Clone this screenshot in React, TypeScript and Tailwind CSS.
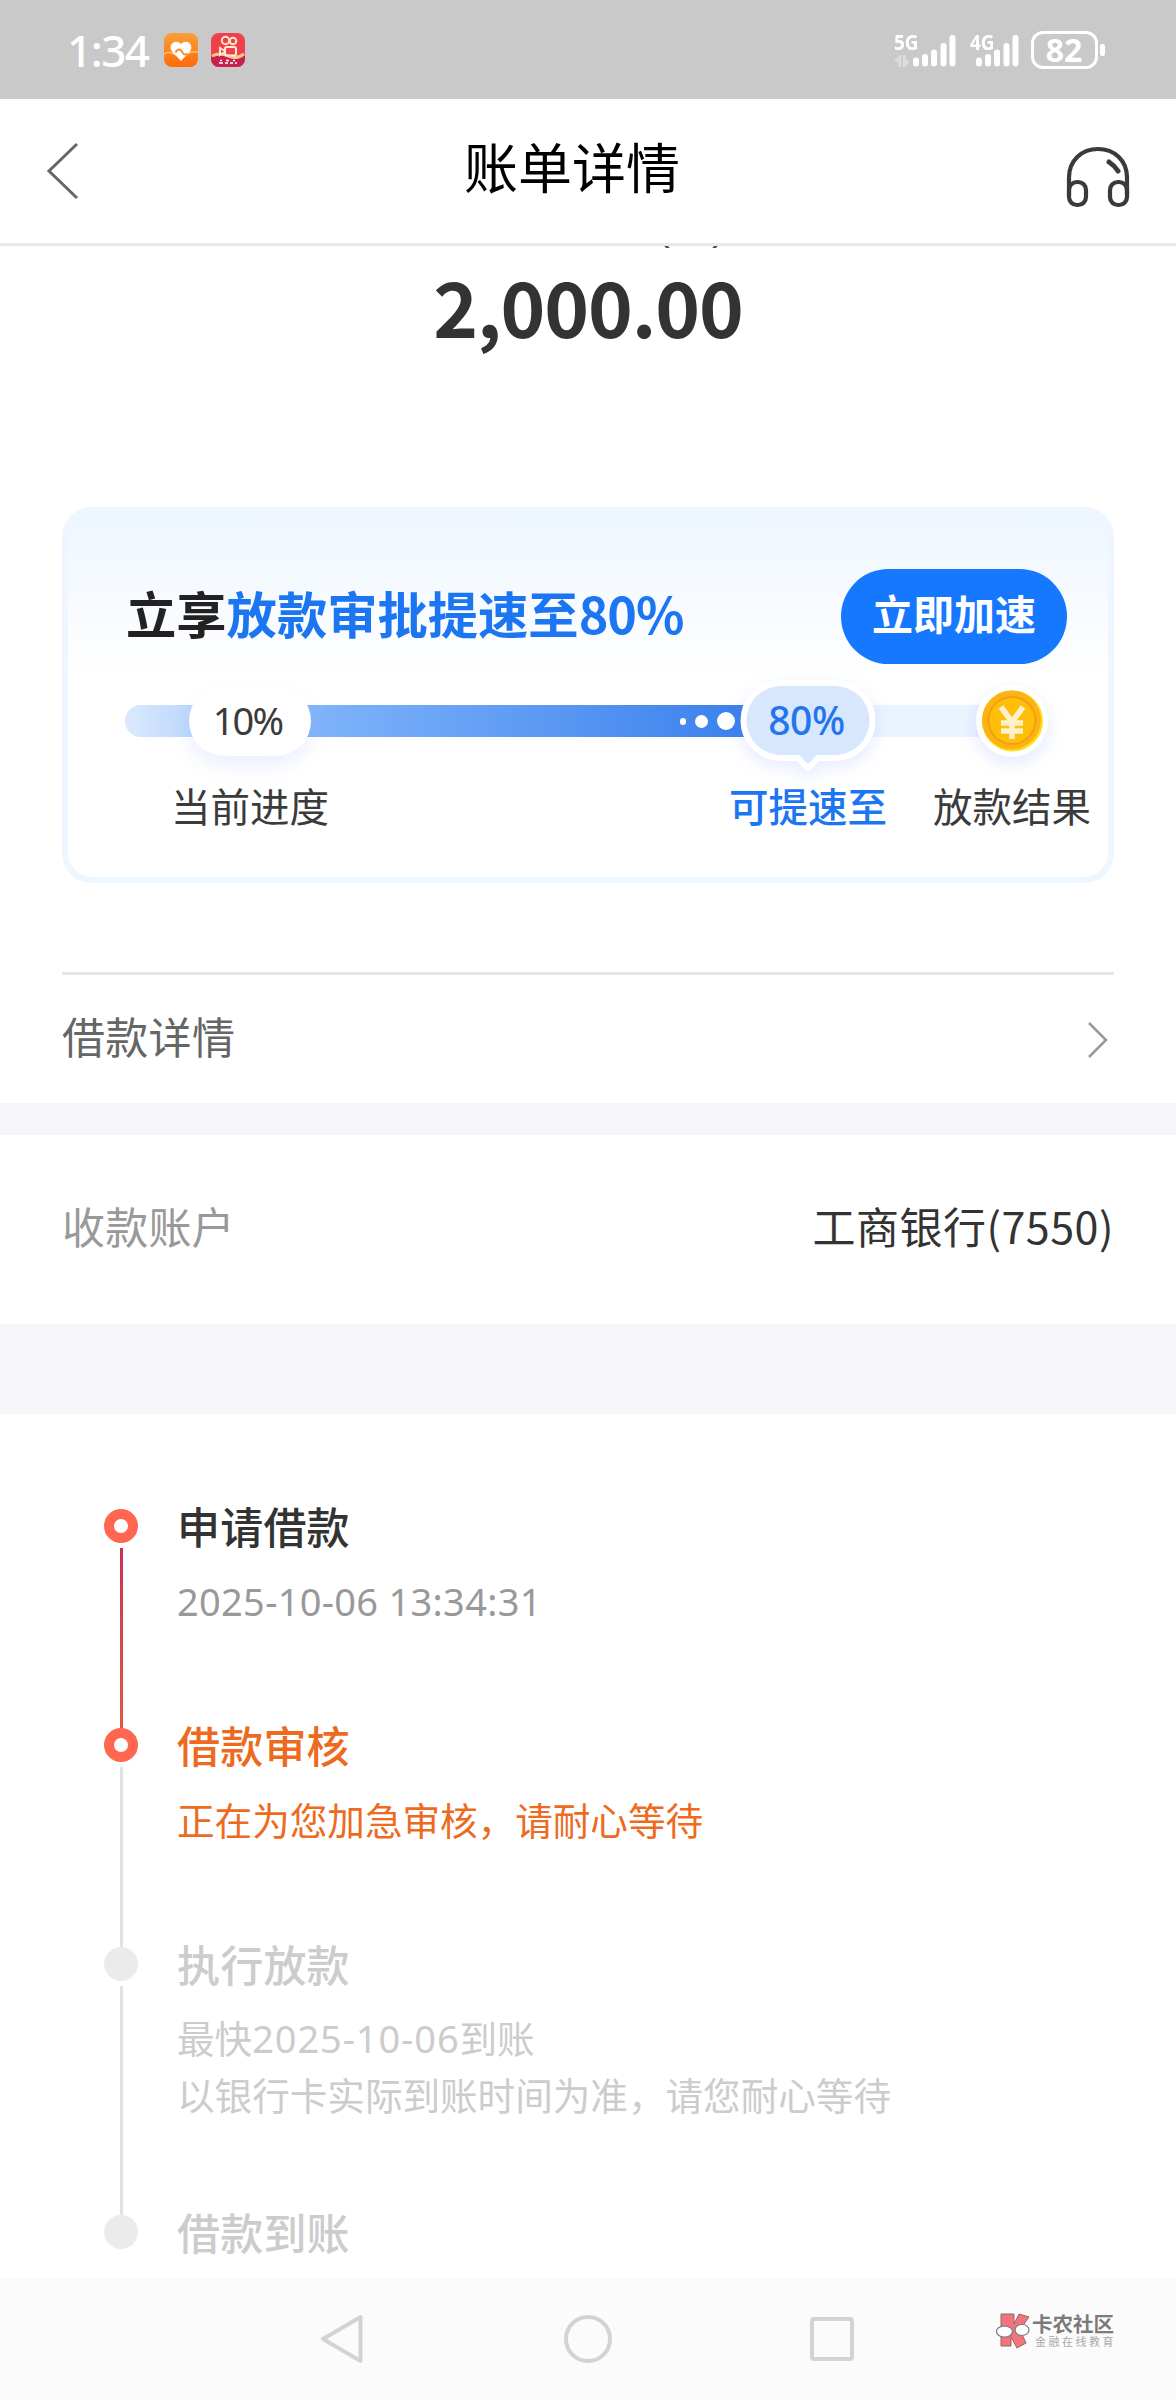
import type { ReactNode } from 'react'

function Bars() {
  return <path d="M3 29.500v3M12 26v6.500M21 21.500v11M30.500 15v17.500M39.500 7v25.500" stroke="#fff" strokeWidth="6" strokeLinecap="round" />
}

function StatusBar() {
  return (
    <div className="flex h-[99px] shrink-0 items-center bg-[#c9c9c9] text-white">
      <span className="ml-[67px] w-[97px] font-['Noto_Sans',sans-serif] text-[44px] leading-[60px] font-medium tracking-[-1.500px]">1:34</span>
      <svg width="34" height="34" viewBox="0 0 34 34" className="mt-px">
        <defs>
          <linearGradient id="heartBg" x1="0" y1="0" x2="0" y2="1">
            <stop offset="0" stopColor="#f9a03c" />
            <stop offset="1" stopColor="#ff6a06" />
          </linearGradient>
        </defs>
        <rect width="34" height="34" rx="8" fill="url(#heartBg)" />
        <path d="M0 21q5-3 10 0t12 0 12-2" fill="none" stroke="#ffc070" strokeWidth="1.5" />
        <path d="M17 28 8 18.5C3.500 12.500 10.500 5 17 11c6.500-6 13.500 1.500 9 7.500z" fill="#fff" />
        <path d="M11.500 19.500c2-4 5-4 7 0 1 2.500 3.500 2.500 5 1" fill="none" stroke="#ff8a22" strokeWidth="2" />
      </svg>
      <svg width="34" height="34" viewBox="0 0 34 34" className="mt-px ml-[13px]">
        <rect width="34" height="34" rx="8" fill="#f0404c" />
        <path d="M0 24q8-4 17-1t17-1v4a8 8 0 0 1-8 8H8a8 8 0 0 1-8-8z" fill="#c9204f" />
        <path d="M1 23q8-4 16 0t16-2" fill="none" stroke="#ffc58c" strokeWidth="3" />
        <g fill="none" stroke="#ffe9cf" strokeWidth="2">
          <circle cx="14.500" cy="7.500" r="3.700" />
          <circle cx="22" cy="8" r="3.300" />
          <rect x="14" y="14" width="11" height="8.500" rx="2" />
          <path d="m14 18-5-3v7l5-3" />
        </g>
        <path d="M8 30h4m2 0h3m2 0h3m2 0h2M9 27.500h2m4 0h3m4 0h2" stroke="#fff" strokeWidth="1.500" />
      </svg>
      <div className="relative ml-auto flex h-[38px] w-[64px] justify-end">
        <span className="absolute top-[-3px] left-0 origin-left scale-x-[0.86] font-['Noto_Sans',sans-serif] text-[22px] leading-[26px] font-bold">5G</span>
        <svg width="45" height="38" viewBox="0 0 45 38"><Bars /></svg>
        <svg width="16" height="12" viewBox="0 0 16 12" className="absolute top-[24px] left-0">
          <path d="M6 12V2L1.500 6.500M10.500 0v10l4-4" fill="none" stroke="#dcdcdc" strokeWidth="3" />
        </svg>
      </div>
      <div className="relative ml-[12px] flex h-[38px] w-[51px] justify-end">
        <span className="absolute top-[-3px] left-0 origin-left scale-x-[0.86] font-['Noto_Sans',sans-serif] text-[22px] leading-[26px] font-bold">4G</span>
        <svg width="45" height="38" viewBox="0 0 45 38"><Bars /></svg>
      </div>
      <div className="ml-[10px] flex h-[38px] w-[67px] items-center justify-center rounded-[12px] border-[3px] border-white pr-px font-['Noto_Sans',sans-serif] text-[32px] leading-[32px] font-bold">82</div>
      <div className="mr-[71px] ml-[2px] h-[12px] w-[5px] rounded-[2px] bg-white" />
    </div>
  )
}

function Header() {
  return (
    <header className="relative flex h-[147px] shrink-0 items-center justify-center border-b-[3px] border-[#e8e8e8]">
      <svg width="34" height="60" viewBox="0 0 34 60" className="absolute top-[42px] left-[46px]">
        <path d="M31 3 3 30l28 27" fill="none" stroke="#666" strokeWidth="3" />
      </svg>
      <h1 className="mr-[32px] mb-[11px] text-[54px] leading-[64px] text-black">账单详情</h1>
      <svg width="64" height="64" viewBox="0 0 64 64" className="absolute top-[46px] left-[1066px]" fill="none" stroke="#3a3a3a" strokeWidth="4.200">
        <path d="M3 50V32.500C3 15 16 4 32 4s29 11 29 28.500V50" />
        <rect x="3" y="37" width="17" height="23" rx="8" />
        <rect x="44" y="37" width="17" height="23" rx="8" />
        <path d="M43 17q5.500 3.500 9 9" strokeLinecap="round" strokeWidth="5" />
      </svg>
    </header>
  )
}

function Coin() {
  return (
    <svg width="80" height="84" viewBox="0 0 80 84" className="absolute top-[-20px] left-[847px] overflow-visible">
      <circle cx="40" cy="36" r="36" fill="#fff" className="drop-shadow-[0_6px_8px_rgba(80,110,255,0.16)]" />
      <circle cx="40.500" cy="36" r="30.500" fill="#ffde1c" />
      <circle cx="39.500" cy="35" r="29.500" fill="#fcb414" />
      <circle cx="40" cy="35.500" r="23.500" fill="#ffbe0a" stroke="#f0a010" strokeWidth="2" />
      <path d="m29 22 11 15 11-15M40 37v17M29 38h22M29 46h22" fill="none" stroke="#fff0cc" strokeWidth="5.500" />
    </svg>
  )
}

function SpeedCard() {
  return (
    <section className="mx-[62px] mt-[130px] flex h-[376px] shrink-0 flex-col rounded-[30px] border-[6px] border-[#eef6ff] bg-linear-to-b from-[#eef6ff] to-white to-[45%] pl-[57px]">
      <div className="mt-[56px] flex h-[95px] items-center justify-between pr-[41px]">
        <h2 className="mb-[10px] ml-px text-[50.300px] leading-[60px] font-bold whitespace-nowrap text-[#222]">
          立享<span className="text-[#1c76f2]">放款审批提速至<span className="tracking-[-1px]">80%</span></span>
        </h2>
        <button className="flex h-[95px] w-[226px] items-center justify-center rounded-full bg-[#1677ff] pb-[10px] text-[41px] leading-[48px] font-bold text-white">立即加速</button>
      </div>
      <div className="relative mt-[41px] flex h-[32px] w-[888px] rounded-l-full bg-[#ebf3fe]">
        <div className="flex h-full w-[630px] items-center justify-end gap-[9px] rounded-l-full bg-linear-to-r from-[#dbe9fd] via-[#7db2fa] via-32% to-[#397fec] pr-[20px]">
          <i className="h-[7px] w-[6px] rounded-full bg-white" />
          <i className="size-[13px] rounded-full bg-white" />
          <i className="size-[18px] rounded-full bg-white" />
        </div>
        <div className="absolute top-[-19px] left-[64px] flex h-[70px] w-[122px] items-center justify-center rounded-full bg-white pr-[5px] pb-[2px] font-['Noto_Sans',sans-serif] text-[38px] tracking-[-1.800px] text-[#3b3b3b] shadow-[0_10px_18px_rgba(80,110,255,0.1)]">10%</div>
        <div className="absolute top-[-19px] left-[622px] flex h-[69px] w-[123px] items-center justify-center pr-[4px] pb-px font-['Noto_Sans',sans-serif] text-[39px] font-medium tracking-[-0.500px] text-[#2474ee]">
          <svg width="146" height="100" viewBox="0 0 146 100" className="absolute top-[-10px] left-[-11px] overflow-visible">
            <path d="M45 10h54a34.500 34.500 0 0 1 0 69h-18l-9 9-9-9H45a34.500 34.500 0 0 1 0-69z" fill="#d7e7fd" stroke="#fff" strokeWidth="12" paintOrder="stroke" className="drop-shadow-[0_6px_8px_rgba(80,110,255,0.14)]" />
          </svg>
          <span className="relative">80%</span>
        </div>
        <Coin />
      </div>
      <div className="mt-[42px] flex text-[39.500px] leading-[52px] whitespace-nowrap text-[#3b3b3b]">
        <span className="ml-[46px] w-[558px]">当前进度</span>
        <span className="w-[204px] font-medium text-[#1c76f2]">可提速至</span>
        <span>放款结果</span>
      </div>
    </section>
  )
}

type StepProps = { title: string; height: string; tone: string; dot: string; line?: string; children?: ReactNode }

function Step({ title, height, tone, dot, line, children }: StepProps) {
  return (
    <li className={`flex ${height} ${tone}`}>
      <div className="flex w-[34px] flex-col items-center">
        <i className={`size-[34px] shrink-0 rounded-full ${dot}`} />
        {line && <i className={`mt-[5px] w-[3px] flex-1 ${line}`} />}
      </div>
      <div className="ml-[39px] whitespace-nowrap">
        <h3 className="-mt-px text-[43px] leading-[34px] font-medium tracking-[0.2px]">{title}</h3>
        {children && <div className="mt-[29px] text-[37.600px] leading-[57px]">{children}</div>}
      </div>
    </li>
  )
}

function NavBar() {
  return (
    <nav className="relative flex h-[122px] shrink-0 items-start bg-[#fbfbfb] pt-[34px]">
      <svg width="536" height="54" viewBox="0 0 536 54" className="ml-[320px]" fill="none" stroke="#d3d3d3" strokeWidth="4" strokeLinejoin="round">
        <path d="M40.500 5v44L3 27z" />
        <circle cx="268" cy="27" r="22" />
        <rect x="492" y="7" width="40" height="40" rx="2" />
      </svg>
      <div className="absolute top-[34px] left-[995px] flex items-start">
        <svg width="36" height="38" viewBox="0 0 36 38">
          <path d="M6 2h13v10l5-10 10 3-9 13 6 13-9 5-6-11v9L6 34z" fill="#f4747c" stroke="#8a6a6c" strokeWidth="1" />
          <ellipse cx="9.500" cy="19.500" rx="8" ry="5.500" fill="#fff" stroke="#777" strokeWidth="1.200" />
          <ellipse cx="27" cy="18" rx="7" ry="5.500" fill="#fff" stroke="#777" strokeWidth="1.200" />
        </svg>
        <div className="ml-px whitespace-nowrap">
          <div className="-mt-px text-[20.500px] leading-[24px] font-bold text-[#7b7b7b]">卡农社区</div>
          <div className="ml-[3px] text-[11px] leading-[12px] tracking-[2.500px] text-[#aaa]">金融在线教育</div>
        </div>
      </div>
    </nav>
  )
}

export default function App() {
  return (
    <div className="flex h-[2400px] w-[1176px] flex-col overflow-hidden bg-white font-['Noto_Sans_CJK_SC',sans-serif] text-[43px] text-[#333]">
      <StatusBar />
      <Header />
      <svg width="60" height="2" viewBox="0 0 60 2" className="ml-[662px] shrink-0">
        <path d="M3 0l4 2M55 0l-4 2" stroke="#444" strokeWidth="2" />
      </svg>
      <div className="mt-[15px] h-[114px] shrink-0 text-center text-[76px] leading-[84px] font-bold tracking-[-1.100px]">2,000.00</div>
      <SpeedCard />
      <div className="mx-[62px] mt-[89px] flex h-[131px] shrink-0 items-center justify-between border-t-[3px] border-[#e6e6e6] text-[#666]">
        <span className="mb-[9px] leading-[60px] tracking-[0.3px]">借款详情</span>
        <svg width="24" height="40" viewBox="0 0 24 40" className="mr-[4px] mt-[2px]">
          <path d="m3 3 17 17L3 37" fill="none" stroke="#999" strokeWidth="2.500" />
        </svg>
      </div>
      <div className="h-[32px] shrink-0 bg-[#f6f6f8]" />
      <div className="flex h-[189px] shrink-0 items-center justify-between px-[62px] pb-[8px]">
        <span className="text-[#999] tracking-[0.2px]">收款账户</span>
        <span className="tracking-[0.5px]">工商银行(7550)</span>
      </div>
      <div className="h-[90px] shrink-0 bg-[#f6f6f8]" />
      <ol className="flex min-h-0 flex-1 flex-col pt-[95px] pl-[104px]">
        <Step title="申请借款" height="h-[219px]" tone="text-[#333]" dot="border-[10px] border-[#ff6750] bg-white" line="bg-linear-to-b from-[#cb3053] to-[#e0583e]">
          <span className="font-['Noto_Sans',sans-serif] text-[38px] tracking-[0.300px] text-[#999]">2025-10-06 13:34:31</span>
        </Step>
        <Step title="借款审核" height="h-[219px]" tone="text-[#ed6a1f]" dot="border-[10px] border-[#ff6750] bg-white" line="bg-[#e2e2e2]">正在为您加急审核，请耐心等待</Step>
        <Step title="执行放款" height="h-[268px]" tone="text-[#ccc]" dot="bg-[#ebebeb]" line="bg-[#e2e2e2]">
          <div className="-mt-px">最快<span className="font-['Noto_Sans',sans-serif] text-[38px] leading-none tracking-[0.900px]">2025-10-06</span>到账</div>
          <div>以银行卡实际到账时间为准，请您耐心等待</div>
        </Step>
        <Step title="借款到账" height="h-[34px]" tone="text-[#ccc]" dot="bg-[#ebebeb]" />
      </ol>
      <NavBar />
    </div>
  )
}
